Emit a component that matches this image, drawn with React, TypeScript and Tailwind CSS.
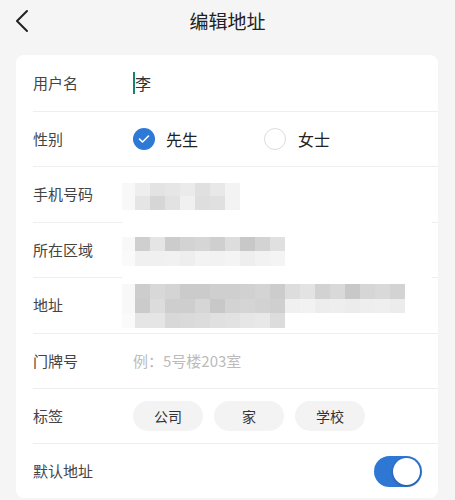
import React from 'react';

const font = { fontFamily: '"Noto Sans CJK SC", "Noto Sans", sans-serif' };

// 打码块（手机号、区域、地址）
const phoneRows = [
  ['#f8f8f8', '#eeeeee', '#e3e3e3', '#e6e6e6', '#ebebeb', '#e0e0e0', '#e8e8e8', '#f3f3f3'],
  ['#f8f8f8', '#e5e5e5', '#d6d6d6', '#e2e2e2', '#f0f0f0', '#dedede', '#e0e0e0', '#f3f3f3'],
];
const regionRows = [
  ['#f8f8f8', '#cfcfcf', '#e5e5e5', '#cccccc', '#d3d3d3', '#d6d6d6', '#cfcfcf', '#dddddd', '#c8c8c8', '#d3d3d3', '#e0e0e0'],
  ['#fafafa', '#f0f0f0', '#f0f0f0', '#f1f1f1', '#eeeeee', '#f3f3f3', '#f2f2f2', '#f4f4f4', '#eeeeee', '#f2f2f2', '#f4f4f4'],
];
const addressRows = [
  ['#f8f8f8', '#cdcdcd', '#d8d8d8', '#d4d4d4', '#cbcbcb', '#cbcbcb', '#cfcfcf', '#cfcfcf', '#d1d1d1', '#d4d4d4', '#cccccc', '#dddddd', '#e3e3e3', '#d2d2d2', '#d9d9d9', '#c8c8c8', '#d6d6d6', '#d9d9d9', '#d3d3d3'],
  ['#f8f8f8', '#cbcbcb', '#dcdcdc', '#cecece', '#cecece', '#d6d6d6', '#c8c8c8', '#d3d3d3', '#d5d5d5', '#d2d2d2', '#cfcfcf', '#f0f0f0', '#f2f2f2', '#ededed', '#eeeeee', '#ececec', '#eeeeee', '#efefef', '#ececec'],
  ['#fafafa', '#e5e5e5', '#e5e5e5', '#d8d8d8', '#dadada', '#dcdcdc', '#e0e0e0', '#e2e2e2', '#e6e6e6', '#e8e8e8', '#dcdcdc'],
];

const Mosaic: React.FC<{ rows: string[][]; h: number }> = ({ rows, h }) => (
  <div className="flex flex-col">
    {rows.map((r, i) => (
      <div key={i} className="flex">
        {r.map((c, j) => (
          <div
            key={j}
            className={j === 0 ? 'w-[13px]' : 'w-[15px]'}
            style={{ backgroundColor: c, height: h }}
          />
        ))}
      </div>
    ))}
  </div>
);

const Row: React.FC<{ label: string; children?: React.ReactNode; tall?: boolean }> = ({
  label,
  children,
  tall = false,
}) => (
  <div className={`flex items-center border-b border-[#eeeeee] ${tall ? 'h-[57px]' : 'h-[55.4px]'}`}>
    <div className="w-[100px] text-[15px] text-[#444]">{label}</div>
    <div className="flex-1 flex items-center">{children}</div>
  </div>
);

const SplitDivider = () => (
  <div className="flex h-px">
    <div className="w-[89px] bg-[#eeeeee]" />
    <div className="flex-1" />
    <div className="w-[6px] bg-[#eeeeee]" />
  </div>
);

export default function App() {
  return (
    <div className="min-h-screen bg-[#f5f5f5]" style={font}>
      {/* 顶部栏 */}
      <div className="relative h-[55px] flex items-center justify-center">
        <svg className="absolute left-[14px] top-[9px]" width="16" height="24" viewBox="0 0 16 24">
          <path d="M13 2 L3 12 L13 22" fill="none" stroke="#222" strokeWidth="2" strokeLinecap="round" strokeLinejoin="round" />
        </svg>
        <div className="text-[19px] text-[#222] -mt-[13px]">编辑地址</div>
      </div>

      {/* 表单卡片 */}
      <div className="ml-4 mr-[17px] bg-white rounded-lg pl-[17px]">
        <Row label="用户名" tall>
          <div className="w-[2px] h-[22px] bg-[#16846a]" />
          <span className="text-[16px] text-[#333]">李</span>
        </Row>
        <Row label="性别">
          <div className="flex items-center w-[131px]">
            <div className="w-[22px] h-[22px] rounded-full bg-[#2e78d6] flex items-center justify-center">
              <svg width="12" height="10" viewBox="0 0 12 10">
                <path d="M1.5 5 L4.5 8 L10.5 2" fill="none" stroke="#fff" strokeWidth="1.6" strokeLinecap="round" strokeLinejoin="round" />
              </svg>
            </div>
            <span className="ml-[11px] text-[16px] text-[#222]">先生</span>
          </div>
          <div className="flex items-center">
            <div className="w-[22px] h-[22px] rounded-full border-[1.5px] border-[#dddddd]" />
            <span className="ml-[12px] text-[16px] text-[#222]">女士</span>
          </div>
        </Row>
        <div className="flex items-center h-[54.4px]">
          <div className="w-[89px] text-[15px] text-[#444]">手机号码</div>
          <div className="mt-[3px]">
            <Mosaic rows={phoneRows} h={13.5} />
          </div>
        </div>
        <SplitDivider />
        <div className="flex items-center h-[54.4px]">
          <div className="w-[89px] text-[15px] text-[#444]">所在区域</div>
          <div className="mt-[3px]">
            <Mosaic rows={regionRows} h={14.5} />
          </div>
        </div>
        <SplitDivider />
        <Row label="地址">
          <div className="-ml-[11px] mt-[1px]">
            <Mosaic rows={addressRows} h={14.7} />
          </div>
        </Row>
        <Row label="门牌号">
          <span className="text-[15px] text-[#bbbbbb]">例：5号楼203室</span>
        </Row>
        <Row label="标签">
          <div className="flex gap-[11px]">
            {['公司', '家', '学校'].map((t) => (
              <div
                key={t}
                className="w-[70px] h-[30px] rounded-full bg-[#f3f3f3] flex items-center justify-center text-[14px] text-[#333]"
              >
                {t}
              </div>
            ))}
          </div>
        </Row>
        <div className="flex items-center h-[53.6px] pr-4">
          <div className="flex-1 text-[15px] text-[#444]">默认地址</div>
          <div className="w-[48px] h-[31px] rounded-full bg-[#2e77d3] flex items-center justify-end pr-[2px]">
            <div className="w-[27px] h-[27px] rounded-full bg-white shadow-[0_1px_3px_rgba(0,0,0,0.3)]" />
          </div>
        </div>
      </div>
    </div>
  );
}
